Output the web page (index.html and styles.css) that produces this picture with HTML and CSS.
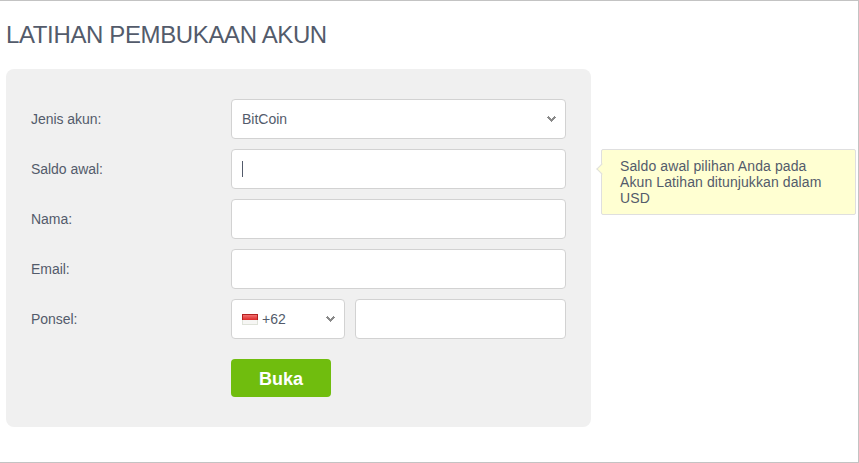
FILE: index.html
```html
<!DOCTYPE html>
<html lang="id">
<head>
    <meta charset="UTF-8">
    <meta name="viewport" content="width=device-width, initial-scale=1.0">
    <title>Latihan Pembukaan Akun</title>
    <link rel="stylesheet" href="styles.css">
</head>

<body>
    <div class="page">
        <h1>LATIHAN PEMBUKAAN AKUN</h1>

        <form class="panel">
            <div class="row">
                <span class="label">Jenis akun:</span>
                <div class="field select">
                    <span>BitCoin</span>
                    <svg class="arrow" width="9" height="6" viewBox="0 0 9 6" shape-rendering="crispEdges">
                        <path d="M1 0h1v1h1v1h1v1h1v-1h1v-1h1v-1h1v1h1v1h-1v1h-1v1h-1v1h-1v1h-1v-1h-1v-1h-1v-1h-1v-1h-1v-1h1z"/>
                    </svg>
                </div>
            </div>

            <div class="row">
                <label class="label" for="balance">Saldo awal:</label>
                <div class="field" id="balance"><span class="caret"></span></div>
                <div class="hint">Saldo awal pilihan Anda pada Akun Latihan ditunjukkan dalam USD</div>
            </div>

            <div class="row">
                <label class="label" for="name">Nama:</label>
                <input class="field" id="name" type="text">
            </div>

            <div class="row">
                <label class="label" for="email">Email:</label>
                <input class="field" id="email" type="text">
            </div>

            <div class="row">
                <label class="label" for="phone">Ponsel:</label>
                <div class="phone">
                    <div class="field select code">
                        <svg class="flag" width="16" height="11" viewBox="0 0 16 11" shape-rendering="crispEdges">
                            <defs>
                                <linearGradient id="red" x1="0" y1="0" x2="0" y2="1">
                                    <stop offset="0" stop-color="#f27070"/>
                                    <stop offset="1" stop-color="#dd2a2a"/>
                                </linearGradient>
                            </defs>
                            <rect width="16" height="6" fill="#b32020"/>
                            <rect x="1" y="1" width="14" height="5" fill="url(#red)"/>
                            <rect y="6" width="16" height="5" fill="#dfe3da"/>
                            <rect x="1" y="6" width="14" height="4" fill="#f6f6f4"/>
                        </svg>
                        <span>+62</span>
                        <svg class="arrow" width="9" height="6" viewBox="0 0 9 6" shape-rendering="crispEdges">
                            <path d="M1 0h1v1h1v1h1v1h1v-1h1v-1h1v-1h1v1h1v1h-1v1h-1v1h-1v1h-1v1h-1v-1h-1v-1h-1v-1h-1v-1h-1v-1h1z"/>
                        </svg>
                    </div>
                    <input class="field" id="phone" type="text">
                </div>
            </div>

            <button class="submit" type="button">Buka</button>
        </form>
    </div>
</body>
</html>
```

FILE: styles.css
```css
* {
    box-sizing: border-box;
}

body {
    margin: 0;
    font-family: "Liberation Sans", Arial, Helvetica, sans-serif;
    font-size: 14px;
    line-height: 16px;
    color: #535b6b;
    background: #fff;
}

.page {
    height: 463px;
    padding: 20px 0 0 6px;
    border: 1px solid #c3c3c3;
    border-left: none;
    overflow: hidden;
}

h1 {
    margin: 0 0 20px;
    font-size: 24px;
    line-height: 28px;
    font-weight: normal;
    letter-spacing: -0.37px;
}

.panel {
    width: 585px;
    height: 358px;
    padding: 30px 25px;
    background: #f0f0f0;
    border-radius: 8px;
}

.row {
    display: flex;
    align-items: center;
    position: relative;
    margin-bottom: 10px;
}

.label {
    width: 200px;
    letter-spacing: -0.05px;
}

.field {
    display: flex;
    align-items: center;
    flex: 1;
    min-width: 0;
    height: 40px;
    padding: 0 10px;
    background: #fff;
    border: 1px solid #d2d2d2;
    border-radius: 4px;
    font: inherit;
    color: inherit;
    outline: none;
}

.arrow {
    margin-left: auto;
    margin-right: -1px;
    fill: #8a8a8a;
}

.caret {
    width: 1px;
    height: 16px;
    background: #535b6b;
}

.phone {
    display: flex;
    flex: 1;
    gap: 10px;
}

.code {
    flex: 0 0 114px;
}

.flag {
    margin-right: 4px;
}

.submit {
    display: block;
    width: 100px;
    height: 38px;
    margin: 20px 0 0 200px;
    padding: 2px 0 0;
    border: none;
    border-radius: 4px;
    background: #70bd0e;
    color: #fff;
    font-family: inherit;
    font-size: 18px;
    font-weight: bold;
    cursor: pointer;
}

/* hint bubble next to the balance field */
.hint {
    position: absolute;
    left: 570px;
    top: 0;
    width: 255px;
    height: 66px;
    padding: 8px 30px 8px 18px;
    background: #ffffd2;
    border: 1px solid #dfdfdf;
    border-radius: 2px;
    letter-spacing: 0.1px;
}

.hint::before {
    content: "";
    position: absolute;
    left: -4px;
    top: 15px;
    width: 7px;
    height: 7px;
    background: #ffffd2;
    border: solid #dfdfdf;
    border-width: 0 0 1px 1px;
    transform: rotate(45deg);
}
```
